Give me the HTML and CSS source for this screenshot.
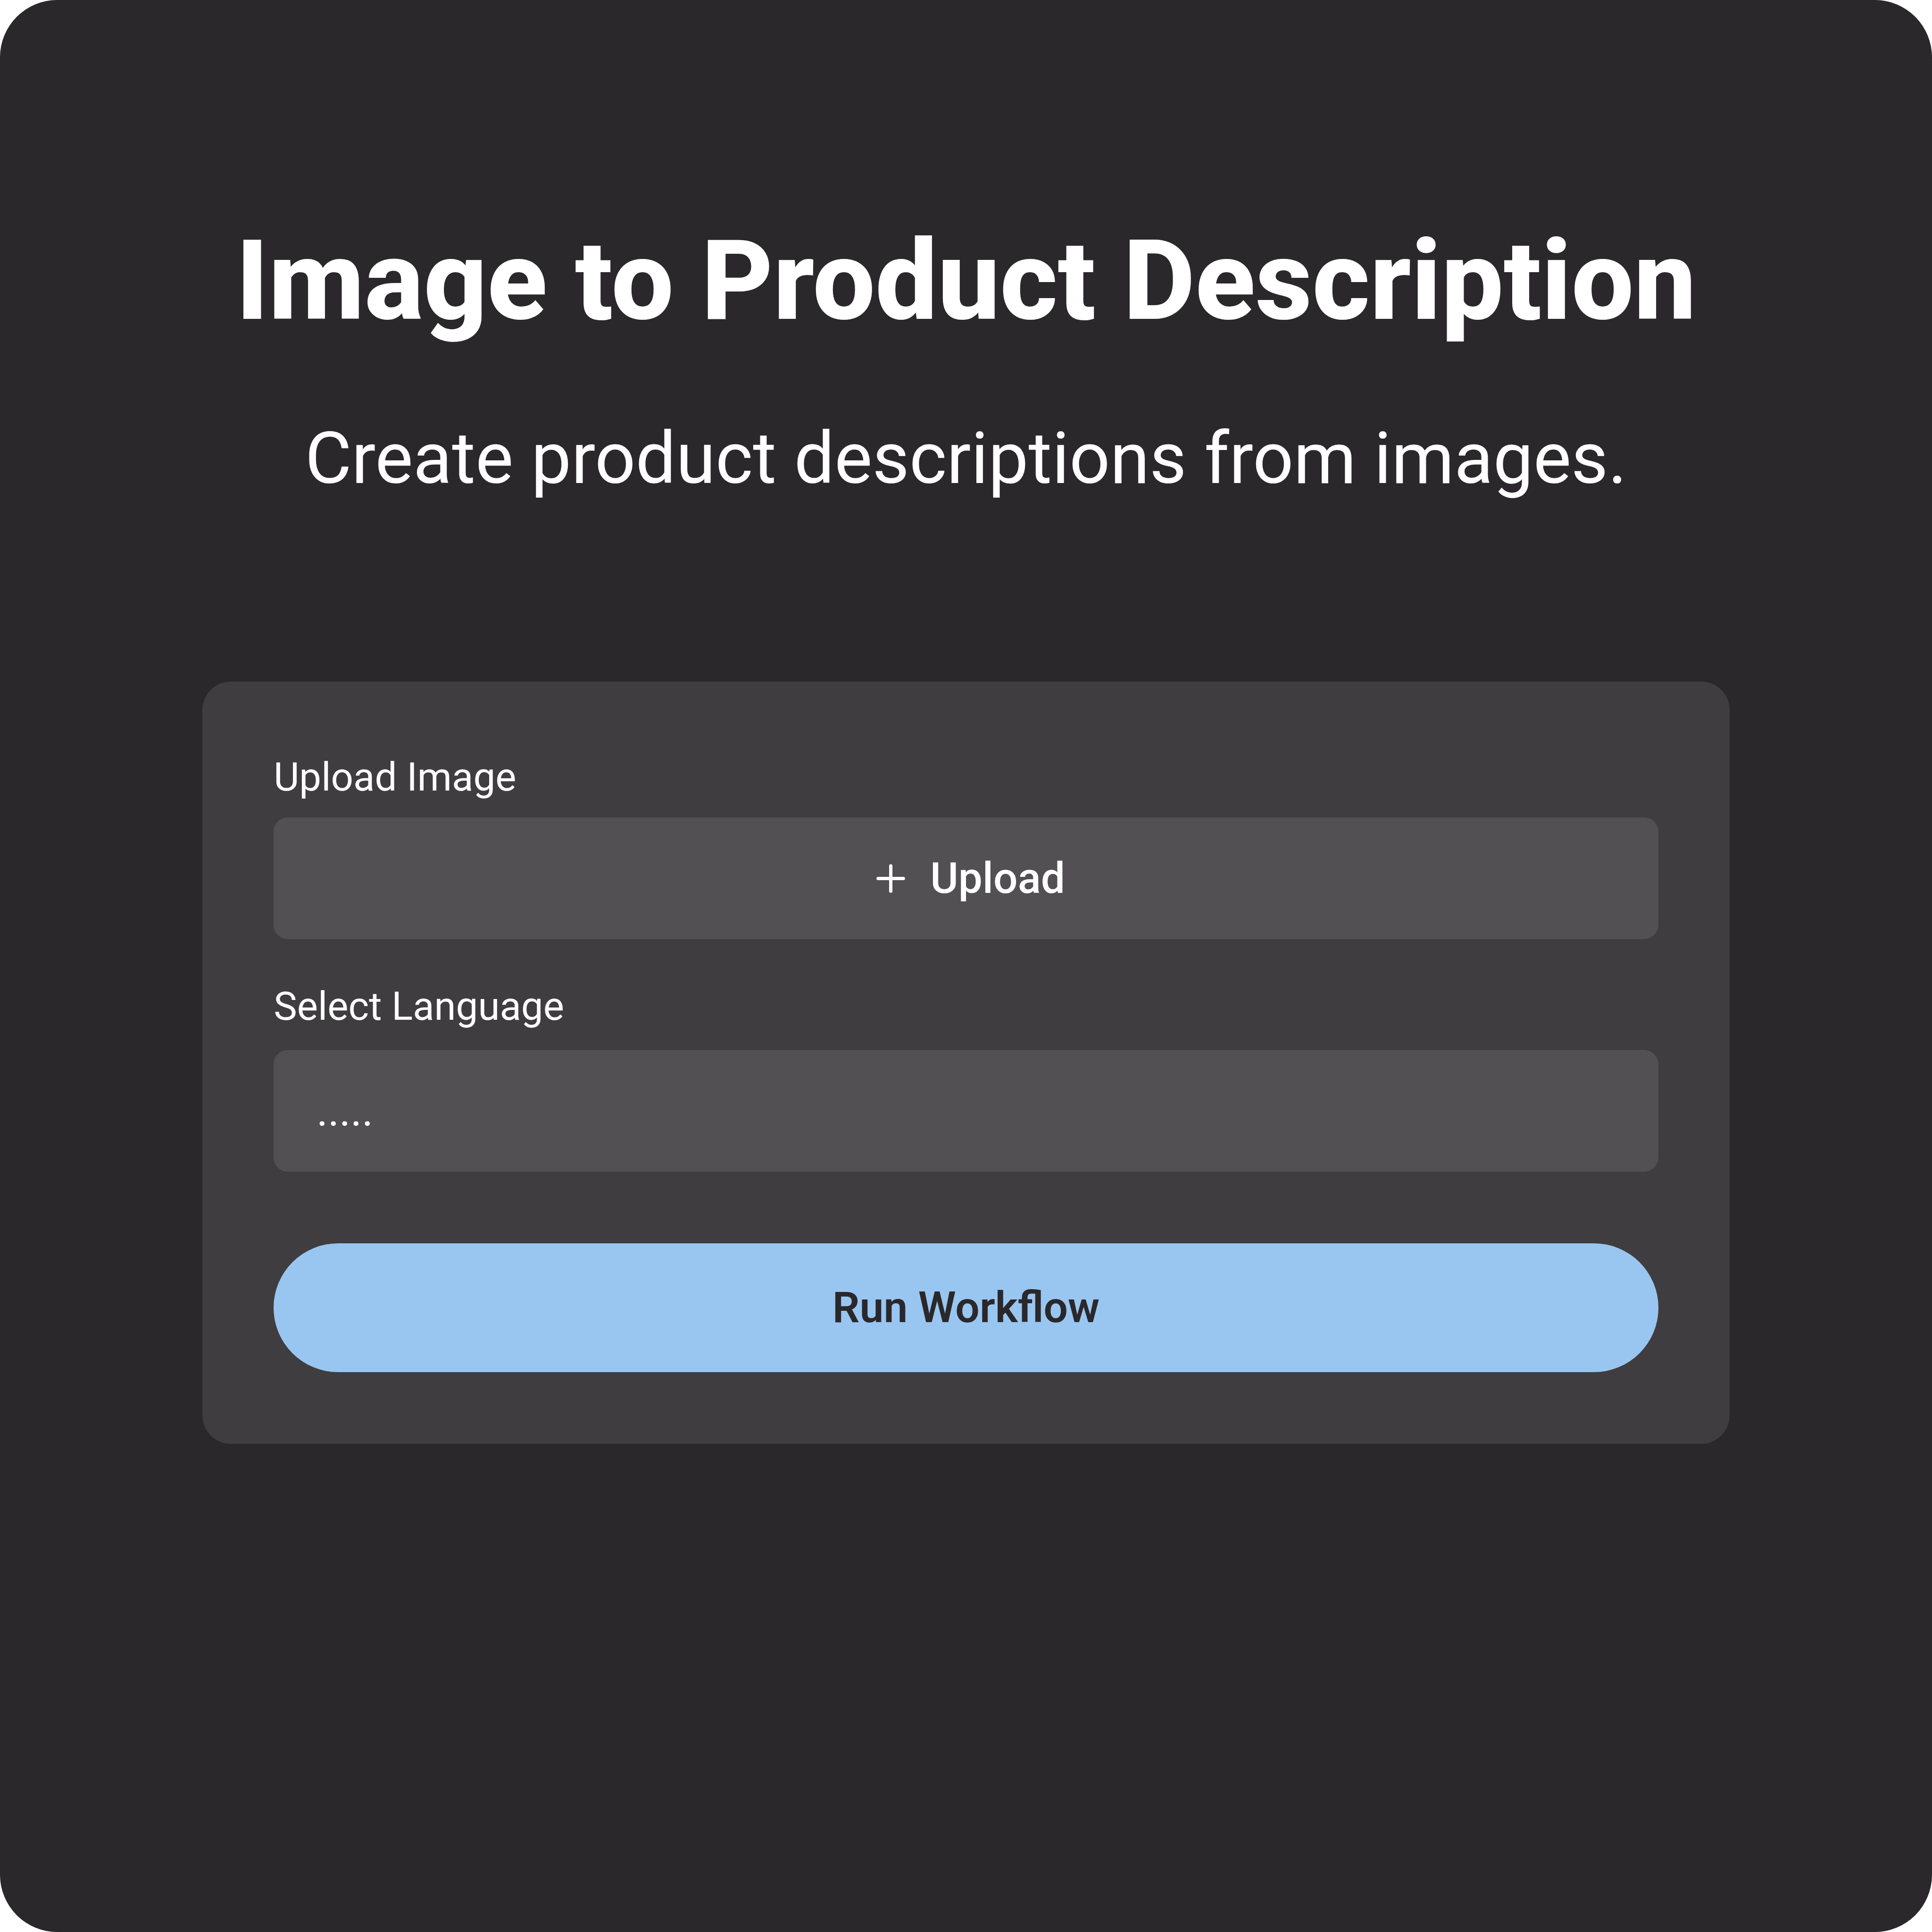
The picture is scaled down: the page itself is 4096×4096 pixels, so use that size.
FILE: index.html
```html
<!DOCTYPE html>
<html lang="en">
<head>
<meta charset="utf-8">
<title>Image to Product Description</title>
<link rel="stylesheet" href="styles.css">
</head>
<body>
<main class="page">
  <h1 class="title">Image to Product Description</h1>
  <p class="subtitle">Create product descriptions from images.</p>
  <section class="card">
    <div class="label">Upload Image</div>
    <div class="field upload">
      <svg class="plus" viewBox="0 0 12 12" aria-hidden="true"><path d="M6 2.47v7.06M2.47 6h7.06"/></svg>
      <span>Upload</span>
    </div>
    <div class="label label-language">Select Language</div>
    <div class="field select">.....</div>
    <div class="run">Run Workflow</div>
  </section>
</main>
</body>
</html>
```
FILE: styles.css
```css
/* 1rem is one unit of a 540-unit square layout */
html {
  font-size: calc(100vw / 540);
  background: #fff;
}
body {
  margin: 0;
  font-family: Roboto, sans-serif;
}
.page {
  box-sizing: border-box;
  width: 540rem;
  height: 540rem;
  padding-top: 60.5rem;
  display: flex;
  flex-direction: column;
  align-items: center;
  background: #2a282b;
  border-radius: 16rem;
  color: #fff;
}
.title {
  margin: 0;
  font-size: 31rem;
  line-height: 36rem;
  font-weight: 800;
  white-space: nowrap;
}
.subtitle {
  margin: 19.66rem 0 0;
  font-size: 20rem;
  line-height: 24rem;
  white-space: nowrap;
}
.card {
  box-sizing: border-box;
  width: 427rem;
  height: 213rem;
  margin-top: 50.34rem;
  padding: 20rem;
  background: #3f3d40;
  border-radius: 8rem;
}
.label {
  font-size: 11rem;
  line-height: 13.5rem;
  margin-bottom: 4.5rem;
}
.label-language {
  margin: 12.1rem 0 5.4rem;
}
.field {
  box-sizing: border-box;
  display: flex;
  align-items: center;
  height: 34rem;
  background: #525053;
  border-radius: 4rem;
  font-size: 12rem;
}
.upload {
  justify-content: center;
  gap: 5rem;
  padding-left: 0.7rem;
  font-weight: 500;
}
.plus {
  width: 12rem;
  height: 12rem;
  fill: none;
  stroke: #fff;
  stroke-width: 0.93;
  stroke-linecap: round;
}
.select {
  padding: 0 12rem;
}
.run {
  display: flex;
  align-items: center;
  justify-content: center;
  height: 36rem;
  margin-top: 20rem;
  border-radius: 18rem;
  background: #99c6f1;
  color: #2a282b;
  font-size: 12rem;
  font-weight: 600;
}
```
